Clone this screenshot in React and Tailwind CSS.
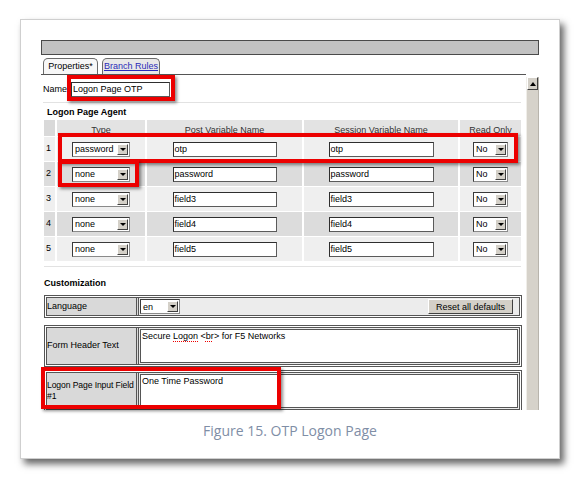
import React from "react";

const rows = [
  { n: 1, type: "password", post: "otp", sess: "otp" },
  { n: 2, type: "none", post: "password", sess: "password" },
  { n: 3, type: "none", post: "field3", sess: "field3" },
  { n: 4, type: "none", post: "field4", sess: "field4" },
  { n: 5, type: "none", post: "field5", sess: "field5" },
];

function DropBtn() {
  return (
    <div className="w-[11px] h-[11px] bg-[#d4d0c8] border border-t-white border-l-white border-r-[#404040] border-b-[#404040] flex items-center justify-center shrink-0">
      <div className="w-0 h-0 border-l-[3px] border-r-[3px] border-t-[3px] border-l-transparent border-r-transparent border-t-black" />
    </div>
  );
}

function Sel({ value, className }) {
  return (
    <div
      className={
        "h-[15px] flex items-center justify-between bg-white border border-[#8a8a8a] border-t-[#3a3a3a] border-l-[#3a3a3a] pl-[2px] pr-[1px] " +
        className
      }
    >
      <span className="text-[9px] leading-[12px] text-black">{value}</span>
      <DropBtn />
    </div>
  );
}

function Inp({ value, className }) {
  return (
    <div
      className={
        "h-[15px] flex items-center bg-white border border-[#5a5a5a] border-t-[#2e2e2e] border-l-[#2e2e2e] pl-[1px] " +
        className
      }
    >
      <span className="text-[9px] leading-[12px] text-black">{value}</span>
    </div>
  );
}

function RedBox({ className }) {
  return (
    <div
      className={
        "absolute border-[4px] border-[#ec0000] shadow-[2px_2px_3px_rgba(0,0,0,0.45)] " +
        className
      }
    />
  );
}

export default function App() {
  return (
    <div className="relative w-[580px] h-[479px] bg-white overflow-hidden pt-[19px] pl-[20px] font-['Liberation_Sans',Arial,sans-serif] text-black">
      <div className="w-[540px] h-[440px] border border-[#cfcfcf] bg-white shadow-[4px_5px_7px_rgba(0,0,0,0.6)] pt-[20px] pl-[20px]">
        {/* gray title bar */}
        <div className="w-[498px] h-[15px] bg-[#c2c2c2] border border-[#4a4a4a]" />

        {/* tabs */}
        <div className="mt-[3px] w-[485px] h-[17px] flex items-end gap-[4px] pl-[2px] border-b border-[#555]">
          <div className="h-[16px] w-[55px] border border-b-0 border-[#6a6a6a] rounded-t-[5px] bg-[#f7f7f7] text-[9px] leading-[15px] text-center">
            Properties*
          </div>
          <div className="h-[16px] w-[58px] border border-b-0 border-[#6a6a6a] rounded-t-[5px] bg-[#e8e8e8] text-[9px] leading-[15px] text-center">
            <span className="underline text-[#2b2bb8]">Branch Rules</span>
          </div>
        </div>

        {/* body */}
        <div className="flex h-[335px]">
          <div className="w-[485px] h-full overflow-hidden flex flex-col">
            {/* Name */}
            <div className="mt-[7px] h-[14px] pl-[2px] flex items-center">
              <span className="w-[28px] text-[9px] leading-[12px]">Name</span>
              <Inp value="Logon Page OTP" className="w-[99px] h-[14px]" />
            </div>
            <div className="mt-[6px] ml-[2px] mr-[5px] border-t border-[#e2e2e2]" />
            <div className="mt-[4px] pl-[6px] text-[9px] leading-[11px] font-bold">
              Logon Page Agent
            </div>

            {/* agent table */}
            <div className="mt-[2px] ml-[3px] w-[477px] grid grid-cols-[11px_88px_155px_154px_61px] gap-x-[2px] gap-y-[1px] bg-white">
              <div className="h-[16px] bg-[#d9d9d9]" />
              <div className="h-[16px] bg-[#e3e3e3] text-[9px] leading-[11px] text-[#333] flex items-end justify-center">Type</div>
              <div className="h-[16px] bg-[#e3e3e3] text-[9px] leading-[11px] text-[#333] flex items-end justify-center">Post Variable Name</div>
              <div className="h-[16px] bg-[#e3e3e3] text-[9px] leading-[11px] text-[#333] flex items-end justify-center">Session Variable Name</div>
              <div className="h-[16px] bg-[#e3e3e3] text-[9px] leading-[11px] text-[#333] flex items-end justify-center">Read Only</div>
              {rows.map((r, i) => {
                const bg = i % 2 === 0 ? "bg-[#efefef]" : "bg-[#dcdcdc]";
                return (
                  <React.Fragment key={r.n}>
                    <div className={"h-[24px] flex items-center pl-[2px] text-[9px] " + bg}>{r.n}</div>
                    <div className={"h-[24px] flex items-center justify-center " + bg}>
                      <Sel value={r.type} className="w-[58px]" />
                    </div>
                    <div className={"h-[24px] flex items-center justify-center " + bg}>
                      <Inp value={r.post} className="w-[104px]" />
                    </div>
                    <div className={"h-[24px] flex items-center justify-center " + bg}>
                      <Inp value={r.sess} className="w-[105px]" />
                    </div>
                    <div className={"h-[24px] flex items-center justify-center " + bg}>
                      <Sel value="No" className="w-[35px]" />
                    </div>
                  </React.Fragment>
                );
              })}
            </div>

            <div className="mt-[5px] ml-[3px] mr-[5px] border-t border-[#e2e2e2]" />
            <div className="mt-[11px] pl-[3px] text-[9px] leading-[11px] font-bold">Customization</div>

            {/* Language */}
            <div className="mt-[6px] ml-[3px] w-[478px] h-[23px] flex border-[3px] border-double border-[#555] shrink-0">
              <div className="w-[92px] bg-[#d9d9d9] border-r-[3px] border-double border-[#555] flex items-center text-[9px]">
                Language
              </div>
              <div className="flex-1 bg-[#ececec] flex items-center justify-between pl-[1px] pr-[6px]">
                <Sel value="en" className="w-[40px] h-[14px]" />
                <div className="w-[85px] h-[15px] bg-[#d4d0c8] border border-t-white border-l-white border-r-[#404040] border-b-[#404040] flex items-center justify-center text-[9px] leading-[12px]">
                  Reset all defaults
                </div>
              </div>
            </div>

            {/* Form Header Text */}
            <div className="mt-[7px] ml-[3px] w-[478px] h-[42px] flex border-[3px] border-double border-[#555] shrink-0">
              <div className="w-[92px] bg-[#d9d9d9] border-r-[3px] border-double border-[#555] flex items-center text-[9px]">
                Form Header Text
              </div>
              <div className="flex-1 bg-[#ececec] p-[1px]">
                <div className="h-full bg-white border border-[#555] pl-[1px] text-[9px] leading-[12px]">
                  Secure{" "}
                  <span className="underline decoration-dotted decoration-[#e00] decoration-1 underline-offset-2">Logon</span>{" "}
                  &lt;<span className="underline decoration-dotted decoration-[#e00] decoration-1 underline-offset-2">br</span>&gt; for F5 Networks
                </div>
              </div>
            </div>

            {/* Logon Page Input Field #1 */}
            <div className="mt-[3px] ml-[3px] w-[478px] h-[42px] flex border-[3px] border-double border-[#555] shrink-0">
              <div className="w-[92px] bg-[#d9d9d9] border-r-[3px] border-double border-[#555] flex flex-col justify-center text-[8.6px] leading-[11px] whitespace-nowrap tracking-[-0.1px]">
                <span>Logon Page Input Field</span>
                <span>#1</span>
              </div>
              <div className="flex-1 bg-[#ececec] p-[1px]">
                <div className="h-full bg-white border border-[#555] pl-[1px] text-[9px] leading-[12px]">
                  One Time Password
                </div>
              </div>
            </div>
          </div>

          {/* scrollbar */}
          <div className="mt-[2px] w-[13px] h-[333px] bg-[#d6d2ca] border-l border-[#f0eee9] border-r border-r-[#b8b4ac] flex flex-col">
            <div className="h-[13px] bg-[#d4d0c8] border border-t-white border-l-white border-r-[#404040] border-b-[#404040] flex items-center justify-center">
              <div className="w-0 h-0 border-l-[3px] border-r-[3px] border-b-[4px] border-l-transparent border-r-transparent border-b-black" />
            </div>
          </div>
        </div>

        {/* caption */}
        <div className="w-[498px] mt-[11px] text-center font-['Open_Sans',sans-serif] text-[14px] leading-[20px] text-[#7f8ea6]">
          Figure 15. OTP Logon Page
        </div>
      </div>

      {/* annotation boxes */}
      <RedBox className="left-[67px] top-[75px] w-[108px] h-[26px]" />
      <RedBox className="left-[58px] top-[133px] w-[460px] h-[30px]" />
      <RedBox className="left-[58px] top-[160px] w-[81px] h-[27px]" />
      <RedBox className="left-[41px] top-[367px] w-[240px] h-[42px]" />
    </div>
  );
}
